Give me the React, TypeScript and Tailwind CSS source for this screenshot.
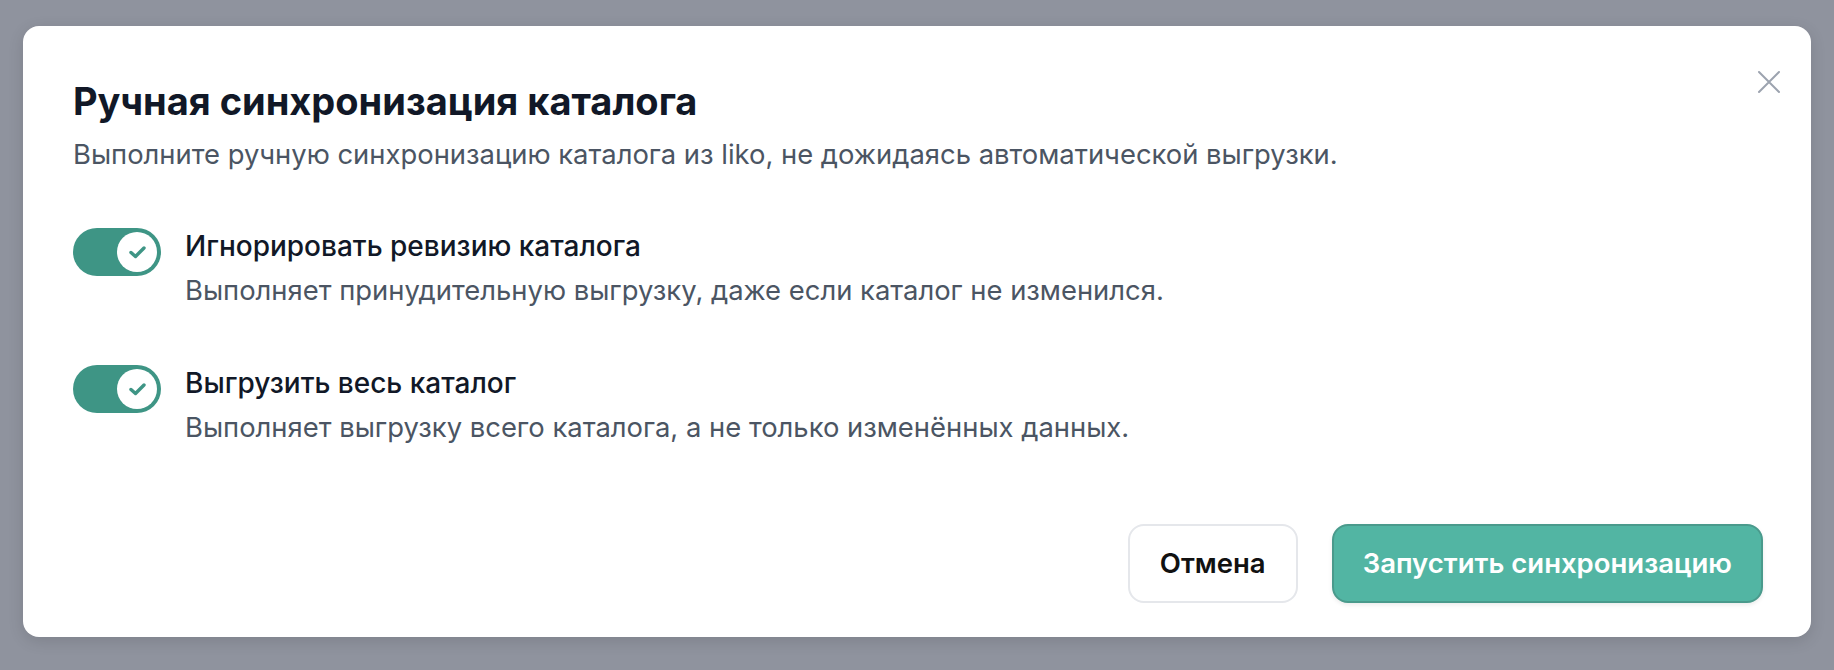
import React from 'react';

// Options shown in the manual sync dialog
const options = [
  {
    id: 'ignore-revision',
    title: 'Игнорировать ревизию каталога',
    description: 'Выполняет принудительную выгрузку, даже если каталог не изменился.',
  },
  {
    id: 'full-export',
    title: 'Выгрузить весь каталог',
    description: 'Выполняет выгрузку всего каталога, а не только изменённых данных.',
  },
];

const Toggle = () => {
  return (
    <button className="flex h-[48px] w-[88px] shrink-0 items-center justify-end rounded-full bg-[#3e9585] p-[4px]">
      <span className="flex h-[40px] w-[40px] items-center justify-center rounded-full bg-white">
        <svg width="17" height="13" viewBox="0 0 17 13" fill="none">
          <path
            d="M2 6.5 L6.5 10.5 L15 2"
            stroke="#3e9585"
            strokeWidth="3.4"
            strokeLinecap="round"
            strokeLinejoin="round"
          />
        </svg>
      </span>
    </button>
  );
};

const App = () => {
  return (
    <div className="h-[670px] w-full overflow-hidden bg-[#8f939e] pl-[23px] pt-[26px] font-['Inter','Noto_Sans',sans-serif]">
      <div className="relative flex h-[611px] w-[1788px] flex-col rounded-[16px] bg-white pb-[34px] pl-[50px] pr-[48px] pt-[53px] shadow-[0_4px_16px_rgba(0,0,0,0.12)]">
        <button className="absolute right-[30px] top-[44px] text-[#9ca3af]">
          <svg width="24" height="24" viewBox="0 0 24 24" fill="none">
            <path d="M2 2 L22 22 M22 2 L2 22" stroke="currentColor" strokeWidth="2" strokeLinecap="round" />
          </svg>
        </button>

        <h2 className="text-[38px] font-bold leading-[44px] text-[#111827]">
          Ручная синхронизация каталога
        </h2>
        <p className="mt-[13px] text-[27.4px] leading-[36px] text-[#4b5563]">
          Выполните ручную синхронизацию каталога из liko, не дожидаясь автоматической выгрузки.
        </p>

        <div className="mt-[56px] flex flex-col gap-[57px]">
          {options.map((opt) => (
            <div key={opt.id} className="flex items-start gap-[24px]">
              <Toggle />
              <div className="flex flex-col gap-[8px]">
                <span className="text-[28px] font-medium leading-[36px] text-[#111827]">{opt.title}</span>
                <span className="text-[27.4px] leading-[36px] text-[#4b5563]">{opt.description}</span>
              </div>
            </div>
          ))}
        </div>

        <div className="mt-auto flex justify-end gap-[34px]">
          <button className="h-[79px] rounded-[16px] border-2 border-[#e5e7eb] bg-white px-[30px] text-[27.5px] font-semibold text-[#111111]">
            Отмена
          </button>
          <button className="h-[79px] rounded-[16px] border-2 border-[#4a9a8c] bg-[#52b5a3] px-[29px] text-[27.5px] font-semibold text-white shadow-[0_2px_4px_rgba(0,0,0,0.08)]">
            Запустить синхронизацию
          </button>
        </div>
      </div>
    </div>
  );
};

export default App;
